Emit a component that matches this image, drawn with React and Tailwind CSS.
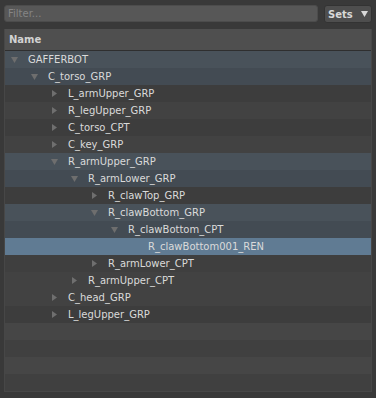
import React from 'react';

const rows = [
  { name: 'GAFFERBOT', depth: 0, open: true, bg: 'bg-[#49525a]' },
  { name: 'C_torso_GRP', depth: 1, open: true, bg: 'bg-[#434b53]' },
  { name: 'L_armUpper_GRP', depth: 2, bg: 'bg-[#3d3d3d]' },
  { name: 'R_legUpper_GRP', depth: 2, bg: 'bg-[#424242]' },
  { name: 'C_torso_CPT', depth: 2, bg: 'bg-[#3d3d3d]' },
  { name: 'C_key_GRP', depth: 2, bg: 'bg-[#424242]' },
  { name: 'R_armUpper_GRP', depth: 2, open: true, bg: 'bg-[#49525a]' },
  { name: 'R_armLower_GRP', depth: 3, open: true, bg: 'bg-[#434b53]' },
  { name: 'R_clawTop_GRP', depth: 4, bg: 'bg-[#3d3d3d]' },
  { name: 'R_clawBottom_GRP', depth: 4, open: true, bg: 'bg-[#49525a]' },
  { name: 'R_clawBottom_CPT', depth: 5, open: true, bg: 'bg-[#434b53]' },
  { name: 'R_clawBottom001_REN', depth: 6, leaf: true, bg: 'bg-[#607b93]' },
  { name: 'R_armLower_CPT', depth: 4, bg: 'bg-[#3f3f3f]' },
  { name: 'R_armUpper_CPT', depth: 3, bg: 'bg-[#424242]' },
  { name: 'C_head_GRP', depth: 2, bg: 'bg-[#424242]' },
  { name: 'L_legUpper_GRP', depth: 2, bg: 'bg-[#3d3d3d]' },
];

const empty = ['bg-[#464646]', 'bg-[#404040]', 'bg-[#464646]', 'bg-[#404040]'];

// indent per level is 20px
const pad = ['pl-[6px]', 'pl-[26px]', 'pl-[46px]', 'pl-[66px]', 'pl-[86px]', 'pl-[106px]', 'pl-[126px]'];

const Arrow = ({ open }) =>
  open ? (
    <svg width="7" height="6" viewBox="0 0 7 6" className="shrink-0">
      <path d="M0 0 H7 L3.5 6 Z" fill="#6e6e6e" />
    </svg>
  ) : (
    <svg width="7" height="7" viewBox="0 0 7 7" className="shrink-0">
      <path d="M1 0 L6 3.5 L1 7 Z" fill="#6f6f6f" />
    </svg>
  );

export default function App() {
  return (
    <div className="w-[376px] h-[398px] bg-[#393939] pt-[5px] px-[4px] font-['DejaVu_Sans',sans-serif] text-[10px] text-[#d6d6d6]">
      <div className="flex gap-[6px] h-[18px]">
        <div className="flex-1 h-[17px] bg-[#575757] rounded-[3px] border border-[#4c4c4c] flex items-center pl-[3px] text-[#858585]">
          Filter...
        </div>
        <div className="w-[48px] h-[18px] bg-[#4e4e4e] rounded-[3px] border border-[#333] flex items-center pl-[3px] gap-[8px] font-bold text-[#d8d8d8]">
          <span>Sets</span>
          <svg width="7" height="6" viewBox="0 0 7 6"><path d="M0 0 H7 L3.5 6 Z" fill="#d8d8d8" /></svg>
        </div>
      </div>
      <div className="mt-[6px] w-[368px] border border-[#474747] border-t-0">
        <div className="h-[22px] bg-[#4f4f4f] border-b border-[#2f2f2f] flex items-center pl-[4px] font-bold text-[#d2d2d2]">
          Name
        </div>
        {rows.map((r) => (
          <div key={r.name} className={`h-[17px] flex items-center ${r.bg} ${pad[r.depth]}`}>
            <div className="w-[7px] flex justify-center">{!r.leaf && <Arrow open={r.open} />}</div>
            <span className="ml-[10px] text-[#dadada]">{r.name}</span>
          </div>
        ))}
        {empty.map((c, i) => (
          <div key={i} className={`h-[17px] ${c}`} />
        ))}
      </div>
    </div>
  );
}
